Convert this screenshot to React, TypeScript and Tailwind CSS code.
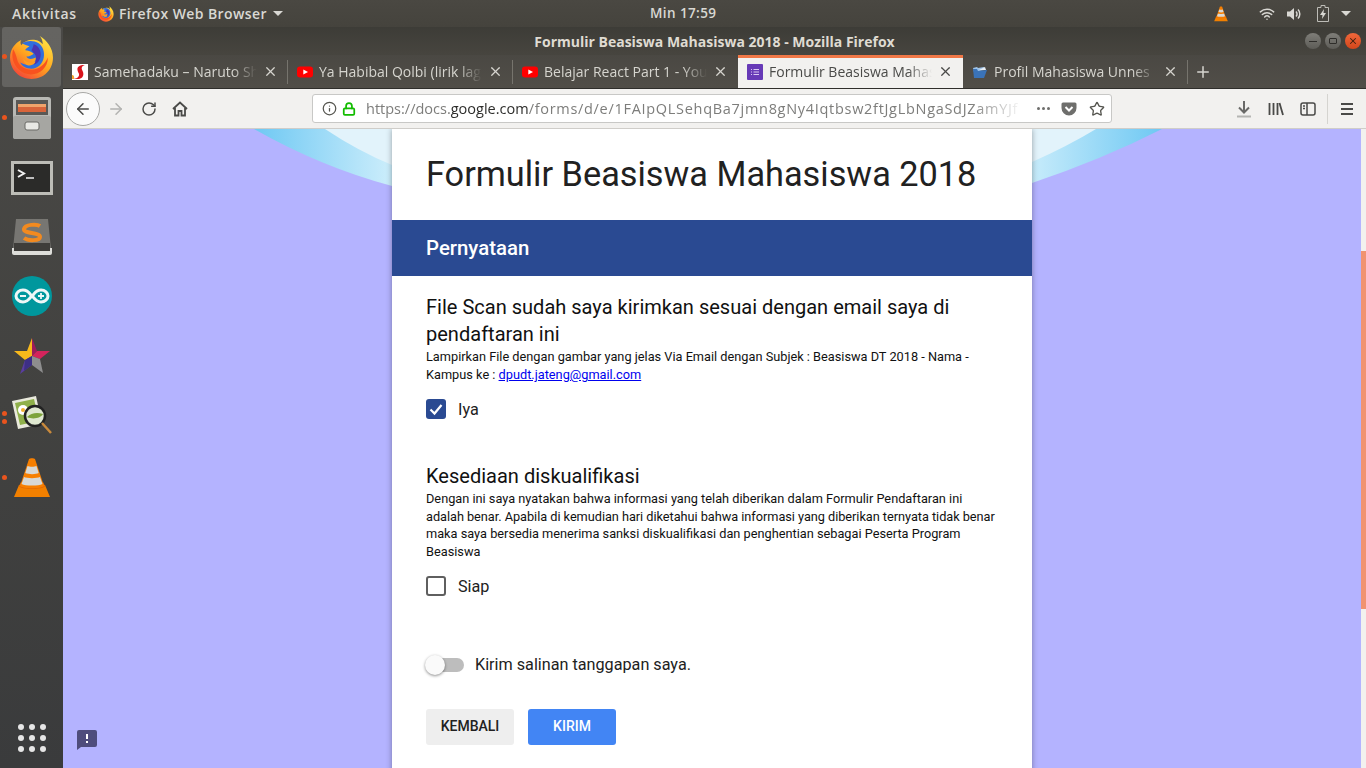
import { ArrowLeft, ArrowRight, Info, Lock, Plus, RotateCw, Star, Wifi, X } from 'lucide-react'
import type { ReactNode } from 'react'

const UI_FONT = "font-['Open_Sans','Noto_Sans',sans-serif]"
const FORM_FONT = "font-['Roboto',sans-serif]"

function FirefoxLogo({ size }: { size: number }) {
  return (
    <svg width={size} height={size} viewBox="0 0 44 44">
      <defs>
        <linearGradient id={`ff-${size}`} x1="0.85" y1="0" x2="0.15" y2="1">
          <stop offset="0" stopColor="#ffe847" />
          <stop offset="0.5" stopColor="#ffa51f" />
          <stop offset="1" stopColor="#f23a3c" />
        </linearGradient>
      </defs>
      <path d="M30 1c7 4 13 12 13 21 0 12-9 21-21 21S1 34 1 22C1 14 6 8 12 5c-1 2-1 3 0 5 3-4 8-6 14-5 3 .5 5 2 7 4 0-3-1-6-3-8z" fill={`url(#ff-${size})`} />
      <path d="M13 8c5-3 11-3 16 0 4 3 6 8 5 14-1 6-6 11-12 11-5 0-9-2-11-6 3 2 8 3 12 1 3-2 4-4 3-6-3 2-8 2-9-1 2 0 6-1 7-3-3-2-6-3-8-3 0-2 3-3 4-4-3-1-6-2-7-3z" fill="#2f6fdc" />
      <path d="M24 9c4 1 7 5 7 10 0 5-3 9-7 10 2-3 3-6 2-9-1-2-3-3-4-5 1-2 2-4 2-6z" fill="#4a35b0" />
      <path d="M4 14c-2 7 0 15 6 20 6 6 17 6 23 0 3-3 5-7 5-12-3 7-9 12-16 12-8 0-13-5-14-10-1-4-2-7-4-10z" fill="#f8521f" />
      <path d="M14 23c2 4 8 5 12 3-1 3-5 5-9 3-2-1-3-4-3-6z" fill="#ff9d1f" />
    </svg>
  )
}

function VlcCone({ size }: { size: number }) {
  return (
    <svg width={size} height={size} viewBox="0 0 40 42">
      <path d="M2 40l5-12h26l5 12z" fill="#f28000" />
      <path d="M7 29c0 4 26 4 26 0l-2-4H9z" fill="#e66a00" />
      <path d="M17 2c1-1 5-1 6 0l9 27c-3 3-21 3-24 0z" fill="#f77f00" />
      <path d="M15.500 9c2 1 7 1 9 0l2.200 7c-3 1.500-10 1.500-13.400 0z" fill="#d8d8d4" />
      <path d="M12 20c3 1.500 13 1.500 16 0l2.500 7c-4 2-17 2-21 0z" fill="#d8d8d4" />
    </svg>
  )
}

function YoutubeIcon() {
  return (
    <svg width="16" height="16" viewBox="0 0 16 16">
      <rect y="2.500" width="16" height="11" rx="3" fill="#f00" />
      <path d="M6.300 5.500v5L11 8z" fill="#fff" />
    </svg>
  )
}

function SamehadakuIcon() {
  return (
    <svg width="16" height="16" viewBox="0 0 16 16">
      <rect width="16" height="16" fill="#fff" />
      <path d="M13 1C7 1 5 3 5.500 6c.5 3 2 3 1.500 5.500C6.500 14 3 15 0 15h7c4-1 5-4 4-7-.5-2-2-3-1-5 .5-1 2-2 3-2z" fill="#d8141c" />
      <path d="M0 11c2 0 2.500 2 2 4H0z" fill="#f3a32c" />
    </svg>
  )
}

function FormsIcon() {
  return (
    <svg width="16" height="16" viewBox="0 0 16 16">
      <rect width="16" height="16" rx="1" fill="#673ab7" />
      <path d="M4 5h1v1H4zm0 2.500h1v1H4zM4 10h1v1H4zm2.500-5H12v1H6.500zm0 2.500H12v1H6.500zm0 2.500H12v1H6.500z" fill="#d9c8f2" />
    </svg>
  )
}

function FolderIcon() {
  return (
    <svg width="16" height="16" viewBox="0 0 16 16">
      <path d="M1 4l4-1 1 1 6-1 1 3-11 2z" fill="#9cc2e8" />
      <path d="M1 5l1 9h10l3-8-9 1-1-2z" fill="#3a73b8" />
      <path d="M7 6l6-3 1 3z" fill="#e8eef5" />
    </svg>
  )
}

function FilesIcon() {
  return (
    <svg width="38" height="42" viewBox="0 0 38 42">
      <rect x="0" y="0" width="38" height="42" rx="3" fill="#b8b8b4" />
      <rect x="3" y="3" width="32" height="15" fill="#5a5855" />
      <rect x="5" y="7" width="28" height="3" fill="#f1a36b" />
      <rect x="5" y="10" width="28" height="5" fill="#d9643a" />
      <rect x="0" y="19" width="38" height="23" rx="2" fill="#a6a6a2" />
      <rect x="12" y="25" width="14" height="8" rx="2" fill="#e8e8e4" stroke="#6a6a66" />
    </svg>
  )
}

function TerminalIcon() {
  return (
    <svg width="42" height="34" viewBox="0 0 42 34">
      <rect x="1.500" y="1.500" width="39" height="31" fill="#2b2b29" stroke="#bdbdb7" strokeWidth="3" />
      <path d="M7 9l6 3.500-6 3.500" fill="none" stroke="#f2f2f2" strokeWidth="2" />
      <path d="M15 17h8" stroke="#f2f2f2" strokeWidth="1.500" />
    </svg>
  )
}

function SublimeIcon() {
  return (
    <svg width="40" height="36" viewBox="0 0 40 36">
      <path d="M4 0h32l3 30H1z" fill="#777672" />
      <path d="M0 29h40v5a2 2 0 0 1-2 2H2a2 2 0 0 1-2-2z" fill="#dededa" />
      <path d="M2 24h36v8H2z" fill="#3e3d3a" />
      <path d="M28 7c-3-2-15-2-16 3-1 5 16 3 16 8 0 4-12 4-16 1" fill="none" stroke="#f28a1f" strokeWidth="4" />
    </svg>
  )
}

function ArduinoIcon() {
  return (
    <svg width="40" height="40" viewBox="0 0 40 40">
      <circle cx="20" cy="20" r="20" fill="#00979d" />
      <path d="M11 14c6 0 8 6 9 6s3-6 9-6c4 0 7 3 7 6s-3 6-7 6c-6 0-8-6-9-6s-3 6-9 6c-4 0-7-3-7-6s3-6 7-6z" fill="none" stroke="#eef7f7" strokeWidth="3" />
      <path d="M8 20h6M26 20h6M29 17v6" stroke="#eef7f7" strokeWidth="1.800" />
    </svg>
  )
}

function StarredIcon() {
  return (
    <svg width="38" height="38" viewBox="0 0 38 38">
      <path d="M19 1l5 13-5 5z" fill="#9c1c5a" />
      <path d="M37 14l-13 0-5 5 8 3z" fill="#d4245c" />
      <path d="M27 22l-8-3 0 9 11 8z" fill="#8e8e8e" />
      <path d="M19 19v9L7 37l5-14z" fill="#5a3e9e" />
      <path d="M1 14h13l5-13 0 18-7 4z" fill="#f8b91c" />
      <path d="M12 23l7-4v9l-8 6z" fill="#3d2f86" />
    </svg>
  )
}

function ImageViewerIcon() {
  return (
    <svg width="42" height="44" viewBox="0 0 42 44">
      <path d="M1 6l24-5 6 28-24 5z" fill="#e9e9dc" />
      <path d="M4 8l19-4 5 22-19 4z" fill="#8fb04a" />
      <circle cx="12" cy="15" r="5" fill="#fff" />
      <circle cx="12" cy="15" r="2" fill="#f0b030" />
      <circle cx="24" cy="21" r="10" fill="#dfe8d0" stroke="#222" strokeWidth="2.500" />
      <path d="M16 22c4-4 10-5 16-3-2 4-10 6-16 3z" fill="#7da33a" />
      <path d="M31 28l9 10" stroke="#c98a3c" strokeWidth="2.500" />
    </svg>
  )
}

function FeedbackIcon() {
  return (
    <svg width="20" height="20" viewBox="0 0 20 20">
      <path d="M2 0h16a2 2 0 0 1 2 2v13a2 2 0 0 1-2 2H4l-4 3V2a2 2 0 0 1 2-2z" fill="#4f4d7c" />
      <rect x="9" y="4" width="2" height="5" fill="#fff" />
      <rect x="9" y="11" width="2" height="2" fill="#fff" />
    </svg>
  )
}

function RunDot({ top }: { top: number }) {
  return <span className="absolute left-[2px] h-[5px] w-[5px] rounded-full bg-[#e9541e]" style={{ top }} />
}

const DOCK_ITEMS: { icon: ReactNode; height: number; dots: number[]; active?: boolean }[] = [
  { icon: <FirefoxLogo size={45} />, height: 60, dots: [27], active: true },
  { icon: <FilesIcon />, height: 62, dots: [28] },
  { icon: <TerminalIcon />, height: 58, dots: [] },
  { icon: <SublimeIcon />, height: 59, dots: [] },
  { icon: <ArduinoIcon />, height: 60, dots: [] },
  { icon: <StarredIcon />, height: 60, dots: [] },
  { icon: <ImageViewerIcon />, height: 62, dots: [25, 33] },
  { icon: <VlcCone size={42} />, height: 60, dots: [27] },
]

function Dock() {
  return (
    <aside className="relative flex h-full w-[63px] shrink-0 flex-col bg-gradient-to-b from-[#4a4946] via-[#424240] to-[#3a3b3c]">
      {DOCK_ITEMS.map((item, i) => (
        <div key={i} className="relative flex shrink-0 items-center justify-center" style={{ height: item.height }}>
          {item.active && <span className="absolute inset-x-[2px] inset-y-0 rounded-[3px] bg-white/15" />}
          <span className="relative flex">{item.icon}</span>
          {item.dots.map((d) => (
            <RunDot key={d} top={d} />
          ))}
        </div>
      ))}
      <div className="mt-auto mb-[16px] grid grid-cols-3 gap-[5px] self-center">
        {Array.from({ length: 9 }).map((_, i) => (
          <span key={i} className="h-[6px] w-[6px] rounded-full bg-[#e6e6e6]" />
        ))}
      </div>
    </aside>
  )
}

function TopBar() {
  return (
    <header className={`relative flex h-[27px] shrink-0 items-center bg-gradient-to-b from-[#4a4842] to-[#45433d] text-[14px] font-semibold tracking-[0.4px] text-[#d9d8d3] ${UI_FONT}`}>
      <span className="w-[98px] pl-3 tracking-[0.7px]">Aktivitas</span>
      <span className="flex">
        <FirefoxLogo size={16} />
      </span>
      <span className="ml-[5px]">Firefox Web Browser</span>
      <span className="ml-[6px] h-0 w-0 border-x-[5px] border-t-[5px] border-x-transparent border-t-[#d9d8d3]" />
      <span className="absolute left-[650px] text-[13.5px]">Min 17:59</span>
      <div className="ml-auto flex items-center">
        <VlcCone size={16} />
        <Wifi size={16} className="ml-[30px] text-[#d9d8d3]" strokeWidth={2.2} />
        <svg width="16" height="16" viewBox="0 0 16 16" className="ml-[11px]" fill="#d9d8d3">
          <path d="M1 5.500h3L8 2v12l-4-3.500H1z" />
          <path d="M10 5.500a3.500 3.500 0 0 1 0 5M12 3.500a6.500 6.500 0 0 1 0 9" fill="none" stroke="#d9d8d3" strokeWidth="1.500" />
        </svg>
        <svg width="12" height="17" viewBox="0 0 12 17" className="ml-[15px]">
          <path d="M4 .500h4v2h3.500v14H.500v-14H4z" fill="none" stroke="#bdbcb7" />
          <path d="M7 4L3 10h2.500L5 14l4-6H6.500z" fill="#d9d8d3" />
        </svg>
        <span className="mr-[15px] ml-[12px] h-0 w-0 border-x-[5px] border-t-[5px] border-x-transparent border-t-[#d9d8d3]" />
      </div>
    </header>
  )
}

function WindowButtons() {
  return (
    <div className="absolute top-[6px] right-[5px] flex gap-[4px]">
      <span className="flex h-[16px] w-[16px] items-center justify-center rounded-full bg-gradient-to-b from-[#7f7e79] to-[#5d5c57]">
        <span className="h-px w-[8px] bg-[#2e2d2a]" />
      </span>
      <span className="flex h-[16px] w-[16px] items-center justify-center rounded-full bg-gradient-to-b from-[#7f7e79] to-[#5d5c57]">
        <span className="h-[6px] w-[8px] rounded-[1px] border border-[#2e2d2a]" />
      </span>
      <span className="flex h-[16px] w-[16px] items-center justify-center rounded-full bg-gradient-to-b from-[#f0673a] to-[#d3461a]">
        <X size={10} strokeWidth={2.5} className="text-[#40200f]" />
      </span>
    </div>
  )
}

function TitleBar() {
  return (
    <div className={`relative flex h-[28px] shrink-0 items-center justify-center bg-gradient-to-b from-[#3d3c37] to-[#47453f] text-[14px] font-bold text-[#dfdbd2] ${UI_FONT}`}>
      Formulir Beasiswa Mahasiswa 2018 - Mozilla Firefox
      <WindowButtons />
    </div>
  )
}

const TABS: { title: string; icon: ReactNode; active?: boolean }[] = [
  { title: 'Samehadaku – Naruto Shippuden', icon: <SamehadakuIcon /> },
  { title: 'Ya Habibal Qolbi (lirik lagu)', icon: <YoutubeIcon /> },
  { title: 'Belajar React Part 1 - YouTube', icon: <YoutubeIcon /> },
  { title: 'Formulir Beasiswa Mahasiswa', icon: <FormsIcon />, active: true },
  { title: 'Profil Mahasiswa Unnes', icon: <FolderIcon /> },
]

function TabStrip() {
  return (
    <div className={`flex h-[33px] shrink-0 items-stretch bg-gradient-to-b from-[#4a4843] to-[#514e48] text-[14px] ${UI_FONT}`}>
      {TABS.map((tab, i) => (
        <div
          key={i}
          className={
            tab.active
              ? 'relative flex w-[225px] items-center gap-[6px] bg-[#f2f1ef] pr-[10px] pl-[9px] text-[#4a4a48]'
              : 'relative flex w-[225px] items-center gap-[6px] pr-[10px] pl-[9px] text-[#d6d5cf]'
          }
        >
          {tab.active && <span className="absolute inset-x-0 top-0 h-[3px] bg-[#f07746]" />}
          <span className="flex shrink-0">{tab.icon}</span>
          <span className="min-w-0 flex-1 overflow-hidden whitespace-nowrap [mask-image:linear-gradient(to_right,black_85%,transparent)]">
            {tab.title}
          </span>
          <X size={15} className={tab.active ? 'shrink-0 text-[#4a4a48]' : 'shrink-0 text-[#d6d5cf]'} />
          {!tab.active && i !== 2 && <span className="absolute top-[5px] right-0 h-[24px] w-px bg-[#76746d]" />}
        </div>
      ))}
      <span className="flex w-[30px] items-center justify-center text-[#d6d5cf]">
        <Plus size={18} strokeWidth={2} />
      </span>
    </div>
  )
}

function NavBar() {
  return (
    <div className={`flex h-[41px] shrink-0 items-center border-t border-[#2f2e2b] border-b border-b-[#cfcdc9] bg-[#f2f1ef] text-[#4a4a48] ${UI_FONT}`}>
      <span className="z-10 ml-[3px] flex h-[34px] w-[34px] items-center justify-center rounded-full border border-[#a8a8a6] bg-[#fbfbfb]">
        <ArrowLeft size={18} />
      </span>
      <span className="flex w-[32px] justify-center text-[#b3b3b1]">
        <ArrowRight size={18} />
      </span>
      <span className="flex w-[34px] justify-center">
        <RotateCw size={16} strokeWidth={2.2} />
      </span>
      <span className="flex w-[28px] justify-center">
        <svg width="16" height="16" viewBox="0 0 16 16" fill="none" stroke="#4a4a48" strokeWidth="1.800">
          <path d="M1 8l7-6.500L15 8M3 7v7.500h3.500V10h3v4.500H13V7" />
        </svg>
      </span>
      <div className="ml-[118px] flex h-[29px] w-[800px] items-center rounded-[3px] border border-[#c8c8c6] bg-white pr-[6px] pl-[9px]">
        <Info size={15} className="shrink-0 text-[#55554f]" />
        <Lock size={14} strokeWidth={3} className="ml-[5px] shrink-0 text-[#12bc00]" />
        <span className="ml-[10px] min-w-0 flex-1 overflow-hidden text-[14.5px] whitespace-nowrap text-[#7d7d7b] [mask-image:linear-gradient(to_right,black_92%,transparent)]">
          https://docs.<span className="text-[#2e2e2c]">google.com</span>
          <span className="tracking-[0.7px]">/forms/d/e/1FAIpQLSehqBa7jmn8gNy4Iqtbsw2ftJgLbNgaSdJZamYJf</span>
        </span>
        <span className="ml-[10px] flex w-[20px] justify-center gap-[2px]">
          <i className="h-[3px] w-[3px] rounded-full bg-[#6e6e6c]" />
          <i className="h-[3px] w-[3px] rounded-full bg-[#6e6e6c]" />
          <i className="h-[3px] w-[3px] rounded-full bg-[#6e6e6c]" />
        </span>
        <svg width="16" height="16" viewBox="0 0 16 16" className="ml-[8px] shrink-0">
          <path d="M2 1.500h12a1.500 1.500 0 0 1 1.500 1.500v4a7.500 7.500 0 0 1-15 0V3A1.500 1.500 0 0 1 2 1.500z" fill="#6e6e6c" />
          <path d="M4.500 6L8 9.500 11.500 6" fill="none" stroke="#fff" strokeWidth="2" />
        </svg>
        <Star size={16} strokeWidth={2} className="ml-[12px] shrink-0 text-[#55554f]" />
      </div>
      <span className="ml-[116px] flex w-[32px] justify-center">
        <svg width="16" height="18" viewBox="0 0 16 18" fill="none" stroke="#6a6a68" strokeWidth="2">
          <path d="M8 1v11M3 7.500L8 12.500l5-5" />
          <path d="M1 16.500h14" stroke="#b5b5b2" />
        </svg>
      </span>
      <span className="flex w-[32px] justify-center">
        <svg width="16" height="14" viewBox="0 0 16 14" fill="none" stroke="#4a4a48" strokeWidth="1.800">
          <path d="M1.500 1v12M5.500 1v12M9.500 1v12M11.500 1l3.500 12" />
        </svg>
      </span>
      <span className="flex w-[32px] justify-center">
        <svg width="16" height="14" viewBox="0 0 16 14" fill="none" stroke="#4a4a48" strokeWidth="1.500">
          <rect x="1" y="1" width="14" height="12" rx="2" />
          <path d="M7 1v12M3 4h2M3 6.500h2" />
        </svg>
      </span>
      <span className="ml-[3px] h-[30px] w-px bg-[#d5d4d0]" />
      <span className="flex w-[38px] justify-center">
        <svg width="14" height="12" viewBox="0 0 14 12" stroke="#4a4a48" strokeWidth="2">
          <path d="M1 1h12M1 6h12M1 11h12" />
        </svg>
      </span>
    </div>
  )
}

function HeaderCurve() {
  return (
    <svg width="1298" height="60" viewBox="0 0 1298 60" className="absolute top-0 left-0">
      <defs>
        <linearGradient id="curve-band" gradientUnits="userSpaceOnUse" x1="191" y1="0" x2="1099" y2="0">
          <stop offset="0" stopColor="#6ec8f3" />
          <stop offset="0.15" stopColor="#cbedfb" />
          <stop offset="0.85" stopColor="#cbedfb" />
          <stop offset="1" stopColor="#6ec8f3" />
        </linearGradient>
      </defs>
      <path d="M191 0Q258 38 329 57L969 54Q1040 30 1099 0Z" fill="url(#curve-band)" />
      <path d="M262 0Q295 22 329 36L969 33Q1005 17 1033 0Z" fill="#e2f3fb" />
    </svg>
  )
}

function CheckRow({ label, checked }: { label: string; checked?: boolean }) {
  return (
    <div className="flex items-center gap-3">
      {checked ? (
        <span className="flex h-5 w-5 items-center justify-center rounded-[3px] bg-[#2a4a92]">
          <svg width="14" height="14" viewBox="0 0 14 14" fill="none" stroke="#fff" strokeWidth="2.200">
            <path d="M1.500 7.500L5.500 11.500 12.500 3" />
          </svg>
        </span>
      ) : (
        <span className="h-5 w-5 rounded-[3px] border-2 border-[#5f5f5f]" />
      )}
      <span className="translate-y-px text-[16.2px] leading-5 text-[#212121]">{label}</span>
    </div>
  )
}

function FormCard() {
  return (
    <main className={`relative mx-auto w-[640px] self-start bg-white shadow-[0_0_6px_rgba(0,0,0,0.35)] ${FORM_FONT}`}>
      <h1 className="flex h-[91px] items-center pl-[34px] text-[34.3px] text-[#212121]">Formulir Beasiswa Mahasiswa 2018</h1>
      <h2 className="flex h-[56px] items-center bg-[#2a4a92] pl-[34px] text-[20.4px] font-medium text-white">Pernyataan</h2>
      <div className="px-[34px] pt-[18px]">
        <h3 className="text-[20.05px] leading-[27px] text-[#111]">File Scan sudah saya kirimkan sesuai dengan email saya di pendaftaran ini</h3>
        <p className="text-[12.75px] leading-[18px] text-[#111]">
          Lampirkan File dengan gambar yang jelas Via Email dengan Subjek : Beasiswa DT 2018 - Nama - Kampus ke :{' '}
          <a className="text-[#0000ee] underline">dpudt.jateng@gmail.com</a>
        </p>
        <div className="mt-[15px]">
          <CheckRow label="Iya" checked />
        </div>
        <h3 className="mt-[44px] text-[20.05px] leading-[27px] text-[#111]">Kesediaan diskualifikasi</h3>
        <p className="text-[12.75px] leading-[17.6px] text-[#111]">
          <span className="block whitespace-nowrap">Dengan ini saya nyatakan bahwa informasi yang telah diberikan dalam Formulir Pendaftaran ini</span>
          <span className="block whitespace-nowrap tracking-[-0.04px]">adalah benar. Apabila di kemudian hari diketahui bahwa informasi yang diberikan ternyata tidak benar</span>
          <span className="block whitespace-nowrap">maka saya bersedia menerima sanksi diskualifikasi dan penghentian sebagai Peserta Program</span>
          <span className="block whitespace-nowrap">Beasiswa</span>
        </p>
        <div className="mt-[15.6px]">
          <CheckRow label="Siap" />
        </div>
        <div className="mt-[59px] flex h-5 items-center">
          <span className="relative ml-[2px] h-[14px] w-[36px] rounded-full bg-[#bdbdbd]">
            <span className="absolute top-[-3px] left-[-3px] h-5 w-5 rounded-full bg-[#fafafa] shadow-[0_1px_3px_rgba(0,0,0,0.45)]" />
          </span>
          <span className="ml-[11px] text-[16.2px] text-[#212121]">Kirim salinan tanggapan saya.</span>
        </div>
        <div className="mt-[34px] flex gap-[14px] pb-[60px]">
          <button className="h-[36px] w-[88px] rounded-[3px] bg-[#eeeeee] text-[14px] font-medium text-[#212121]">KEMBALI</button>
          <button className="h-[36px] w-[88px] rounded-[3px] bg-[#4285f4] text-[14px] font-medium text-white">KIRIM</button>
        </div>
      </div>
    </main>
  )
}

export default function App() {
  return (
    <div className="flex h-[768px] w-[1366px] flex-col overflow-hidden">
      <TopBar />
      <div className="flex min-h-0 flex-1">
        <Dock />
        <div className="flex min-w-0 flex-1 flex-col">
          <TitleBar />
          <TabStrip />
          <NavBar />
          <div className="flex min-h-0 flex-1">
            <div className="relative flex min-w-0 flex-1 overflow-hidden bg-[#b4b3ff]">
              <HeaderCurve />
              <FormCard />
              <span className="absolute top-[601px] left-[14px] flex">
                <FeedbackIcon />
              </span>
            </div>
            <div className="w-[5px] shrink-0 bg-[#f2f1ef] pt-[122px]">
              <div className="h-[358px] bg-[#f19370]" />
            </div>
          </div>
        </div>
      </div>
    </div>
  )
}
